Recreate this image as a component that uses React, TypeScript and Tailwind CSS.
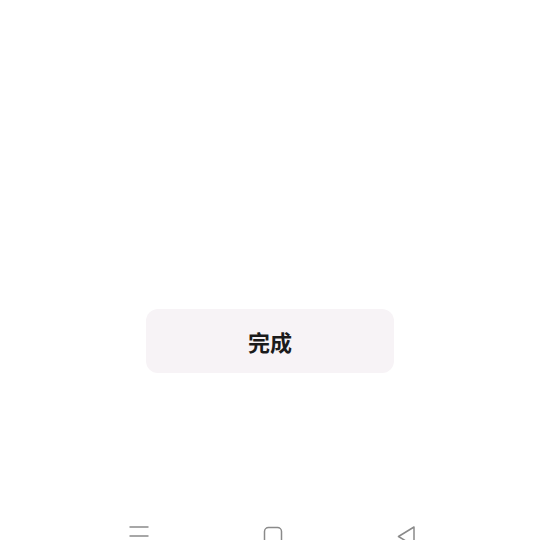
import React from 'react';

// Completion screen: one "done" button and the system nav bar at the bottom

export default function App() {
  return (
    <div
      className="w-[540px] h-[540px] overflow-hidden bg-white flex flex-col"
      style={{ fontFamily: '"Noto Sans CJK SC", "Noto Sans", sans-serif' }}
    >
      {/* Done button */}
      <div className="pt-[309px] flex justify-center">
        <button className="w-[248px] h-[64px] rounded-[12px] bg-[#f7f3f6] flex items-center justify-center text-[22px] font-bold text-[#1b1b1b]">
          完成
        </button>
      </div>

      {/* System navigation */}
      <nav className="mt-[153px] flex pl-[119px] gap-[94px] shrink-0">
        <div className="w-[40px] h-[24px] flex justify-center">
          <svg width="20" height="24" viewBox="0 0 20 24" fill="none" stroke="#8a8a8a" strokeWidth="1.5">
            <path d="M0.5 1h19M0.5 10h19M0.5 19h19" />
          </svg>
        </div>
        <div className="w-[40px] h-[24px] flex justify-center">
          <svg width="20" height="24" viewBox="0 0 20 24" fill="none" stroke="#8a8a8a" strokeWidth="1.5">
            <rect x="1.5" y="1.5" width="17" height="18" rx="4" />
          </svg>
        </div>
        <div className="w-[40px] h-[24px] flex justify-center">
          <svg width="20" height="24" viewBox="0 0 20 24" fill="none" stroke="#8a8a8a" strokeWidth="1.5" strokeLinejoin="round">
            <path d="M17 1L1.5 10.5L17 20Z" />
          </svg>
        </div>
      </nav>
    </div>
  );
}
